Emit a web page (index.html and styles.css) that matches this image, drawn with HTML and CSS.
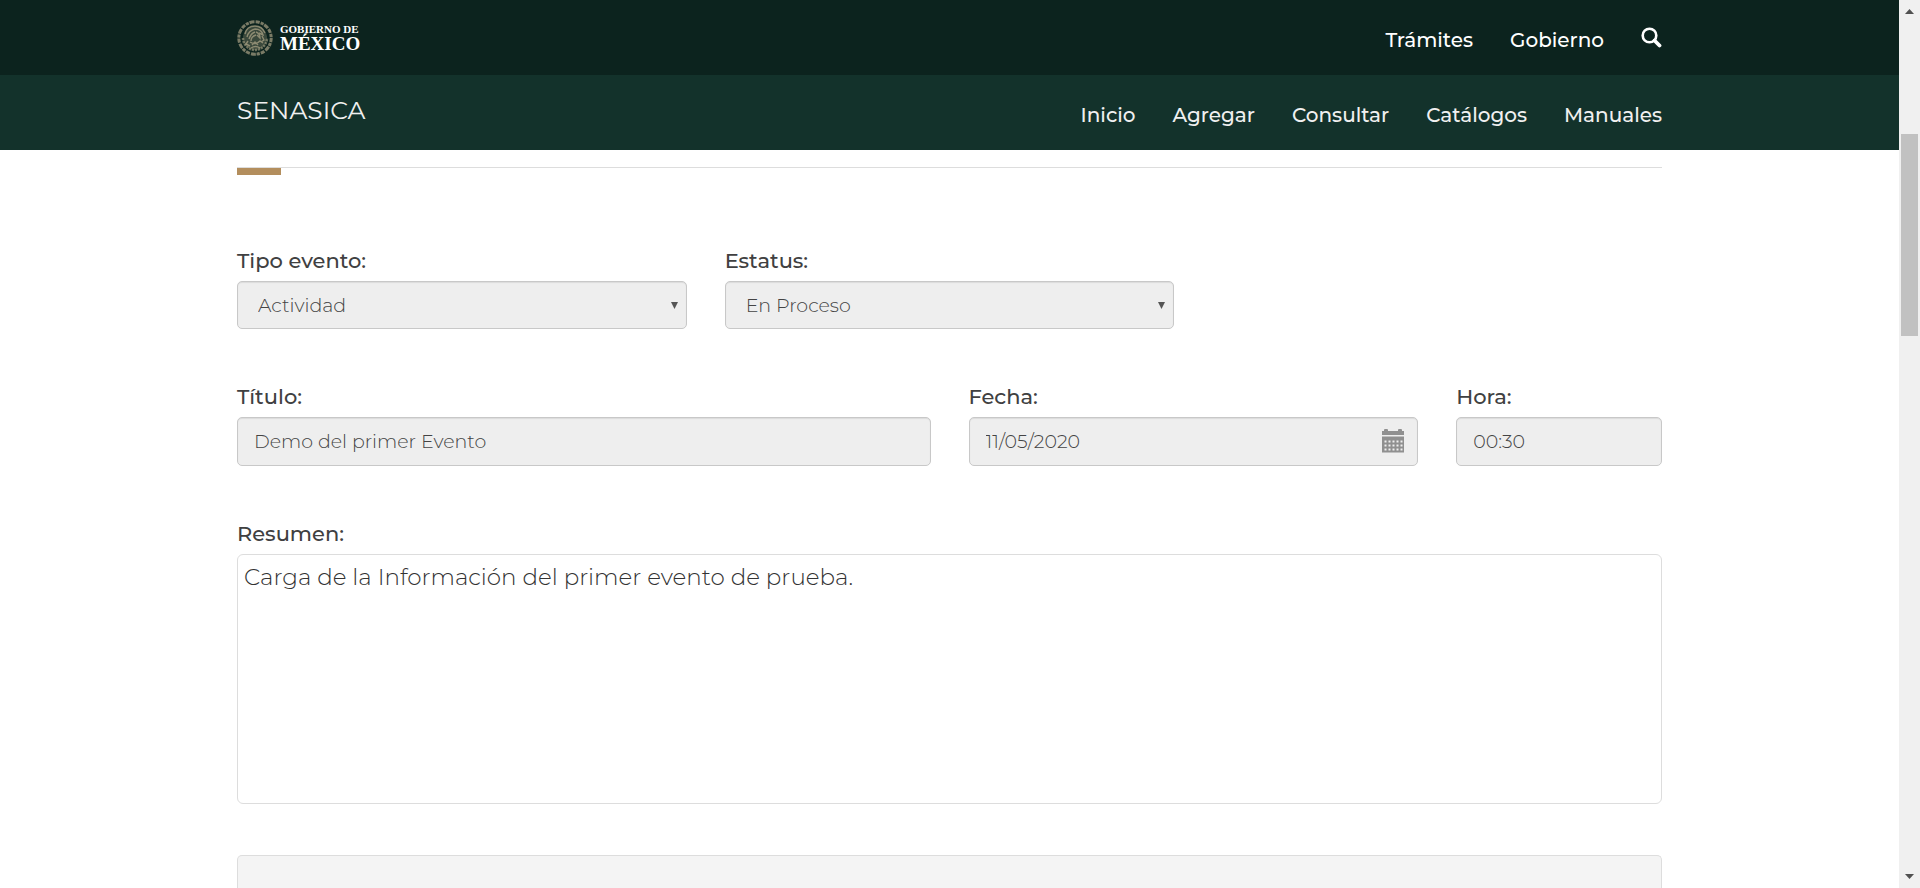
FILE: index.html
```html
<!DOCTYPE html>
<html lang="es">
<head>
<meta charset="utf-8">
<title>SENASICA</title>
<link rel="stylesheet" href="styles.css">
</head>
<body>
<header class="site-header">
  <div class="bar bar-top">
    <div class="container bar-inner">
      <a class="brand" href="#">
        <svg class="seal" viewBox="0 0 36 36" aria-hidden="true" fill="none" stroke="#a9a184">
          <circle cx="18" cy="18" r="16.200" stroke-width="3" stroke-dasharray="4.100 1 3.200 .8 5 1.200" opacity=".7"/>
          <circle cx="18" cy="18" r="12" fill="#a9a184" fill-opacity=".3" stroke="none"/>
          <path d="M6 18a12 12 0 0 0 24 0" stroke-width="2.500" stroke-dasharray="2.200 .9" opacity=".6"/>
          <path d="M8 14c1-5 5-8 10-8 4 0 8 2 10 7M10 17c1-4 4-7 8-8M12 19c1-3 3-6 6-7M14 21c0-3 2-5 5-6M18 9c4 0 7 2 8 6l-4-2M19 12c3 1 4 3 4 6l-3-3M13 22c3 2 7 2 10-1l3 2M15 25l3-3 3 3M25 16l2 4-3 2M11 21l-2 3 4 2M14 28c3-2 6-2 9 0" stroke-width="1.400" opacity=".75"/>
        </svg>
        <span class="brand-text">
          <span class="brand-small">GOBIERNO DE</span>
          <span class="brand-large">MÉXICO</span>
        </span>
      </a>
      <nav class="nav nav-top" aria-label="Gobierno">
        <a href="#">Trámites</a>
        <a href="#">Gobierno</a>
        <a class="search" href="#" aria-label="Buscar">
          <svg viewBox="0 0 21 21" aria-hidden="true"><circle cx="8.500" cy="8.500" r="6.800" fill="none" stroke="#fff" stroke-width="2.600"/><path d="M13.500 13.500l5 5" stroke="#fff" stroke-width="3.800" stroke-linecap="round"/></svg>
        </a>
      </nav>
    </div>
  </div>
  <div class="bar bar-sub">
    <div class="container bar-inner">
      <a class="site-name" href="#">SENASICA</a>
      <nav class="nav" aria-label="Principal">
        <a href="#">Inicio</a>
        <a href="#">Agregar</a>
        <a href="#">Consultar</a>
        <a href="#">Catálogos</a>
        <a href="#">Manuales</a>
      </nav>
    </div>
  </div>
</header>
<main class="container">
  <div class="rule"></div>
  <form class="form">
    <div class="row">
      <div class="field span-4">
        <label for="tipo">Tipo evento:</label>
        <div class="control">
          <select id="tipo" class="input select" disabled><option>Actividad</option></select>
          <svg class="caret" viewBox="0 0 7 7" aria-hidden="true"><path d="M0 0h7L3.500 7z" fill="#555"/></svg>
        </div>
      </div>
      <div class="field span-4">
        <label for="estatus">Estatus:</label>
        <div class="control">
          <select id="estatus" class="input select" disabled><option>En Proceso</option></select>
          <svg class="caret" viewBox="0 0 7 7" aria-hidden="true"><path d="M0 0h7L3.500 7z" fill="#555"/></svg>
        </div>
      </div>
    </div>
    <div class="row">
      <div class="field span-6">
        <label for="titulo">Título:</label>
        <input id="titulo" class="input" type="text" value="Demo del primer Evento" readonly>
      </div>
      <div class="field span-4">
        <label for="fecha">Fecha:</label>
        <div class="control">
          <input id="fecha" class="input" type="text" value="11/05/2020" readonly>
          <svg class="calendar" viewBox="0 0 22 24" aria-hidden="true" fill="#909090">
            <path d="M0 2h2V1q0-1 1-1h2q1 0 1 1v1h10V1q0-1 1-1h2q1 0 1 1v1h2v4H0z"/>
            <path fill-rule="evenodd" d="M0 7.500h22V23.500H0zM2.500 11.500v2h2v-2zm4 0v2h2v-2zm4 0v2h2v-2zm4 0v2h2v-2zm4 0v2h2v-2zM2.500 15.500v2h2v-2zm4 0v2h2v-2zm4 0v2h2v-2zm4 0v2h2v-2zm4 0v2h2v-2zM2.500 19.500v2h2v-2zm4 0v2h2v-2zm4 0v2h2v-2zm4 0v2h2v-2zm4 0v2h2v-2z"/>
          </svg>
        </div>
      </div>
      <div class="field span-2">
        <label for="hora">Hora:</label>
        <input id="hora" class="input" type="text" value="00:30" readonly>
      </div>
    </div>
    <div class="row">
      <div class="field span-12">
        <label for="resumen">Resumen:</label>
        <textarea id="resumen" class="textarea">Carga de la Información del primer evento de prueba.</textarea>
      </div>
    </div>
  </form>
  <section class="panel"></section>
</main>
<div class="scrollbar" aria-hidden="true">
  <svg class="scroll-arrow" viewBox="0 0 9 5"><path d="M4.500 0L9 5H0z" fill="#505050"/></svg>
  <div class="scroll-track"><div class="scroll-thumb"></div></div>
  <svg class="scroll-arrow" viewBox="0 0 9 5"><path d="M0 0h9L4.500 5z" fill="#505050"/></svg>
</div>
</body>
</html>
```
FILE: styles.css
```css
* { box-sizing: border-box; }
html { overflow: hidden; }
body {
  margin: 0;
  height: 100vh;
  padding-right: 21px;
  display: flex;
  flex-direction: column;
  overflow: hidden;
  background: #fff;
  color: #404041;
  font-family: Montserrat, Inter, "Open Sans", sans-serif;
  font-size: 21px;
  line-height: 32px;
}
a { color: inherit; text-decoration: none; }
svg { display: block; }
main { flex: 1; min-height: 0; display: flex; flex-direction: column; }
.site-header { flex: none; }
.container { width: 100%; max-width: 1465px; margin: 0 auto; padding: 0 20px; }
.bar-inner { display: flex; justify-content: space-between; align-items: center; height: 75px; }
.bar-top { background: #0c231e; color: #fff; }
.bar-sub { background: #13322b; color: #f0f0f0; }
.brand { display: flex; align-items: center; gap: 7px; }
.seal { width: 36px; height: 36px; }
.brand-text { display: flex; flex-direction: column; font-family: "Liberation Serif", serif; font-weight: 700; }
.brand-small { font-size: 11px; line-height: 12px; }
.brand-large { font-size: 19px; line-height: 18px; }
.nav { display: flex; align-items: center; gap: 37px; font-size: 20px; font-weight: 500; padding-top: 4px; }
.search { padding-bottom: 4px; }
.search svg { width: 21px; height: 21px; }
.site-name { font-size: 25px; padding-bottom: 5px; }
.rule { margin-top: 17px; border-top: 1px solid #ddd; }
.rule::after { content: ""; display: block; width: 44px; height: 7px; background: #b38e5d; }
.form { flex: none; display: flex; flex-direction: column; gap: 52px; padding-top: 70px; }
.row { display: grid; grid-template-columns: repeat(12, minmax(0, 1fr)); column-gap: 38px; }
.field { display: flex; flex-direction: column; gap: 4px; }
.span-2 { grid-column: span 2; }
.span-4 { grid-column: span 4; }
.span-6 { grid-column: span 6; }
.span-12 { grid-column: span 12; }
.field label { font-size: 21px; font-weight: 500; }
.control { position: relative; }
.input {
  display: block;
  width: 100%;
  height: 49px;
  padding: 0 16px;
  border: 1px solid #c8c8c8;
  border-radius: 5px;
  background: #eee;
  box-shadow: inset 0 1px 1px rgba(0, 0, 0, .08);
  color: #444;
  font: 300 19px/27px Montserrat, Inter, "Open Sans", sans-serif;
}
.select { appearance: none; height: 48px; padding: 0 20px; opacity: 1; }
.caret { position: absolute; right: 9px; top: 21px; width: 7px; height: 7px; }
.calendar { position: absolute; right: 14px; top: 12px; width: 22px; height: 24px; }
.textarea {
  display: block;
  width: 100%;
  height: 250px;
  padding: 6px;
  border: 1px solid #ddd;
  border-radius: 6px;
  resize: none;
  color: #333;
  font: 300 23px/32px Montserrat, Inter, "Open Sans", sans-serif;
}
.panel { flex: 1; margin-top: 51px; border: 1px solid #ddd; border-bottom: 0; border-radius: 5px 5px 0 0; background: #f4f4f4; }
.scrollbar {
  position: fixed;
  top: 0;
  right: 0;
  bottom: 0;
  width: 21px;
  padding: 9px 2px;
  display: flex;
  flex-direction: column;
  align-items: center;
  background: #f0f0f0;
}
.scroll-arrow { width: 9px; height: 5px; }
.scroll-track { flex: 1; width: 100%; padding-top: 120px; }
.scroll-thumb { height: 202px; background: #c1c1c1; }
```
